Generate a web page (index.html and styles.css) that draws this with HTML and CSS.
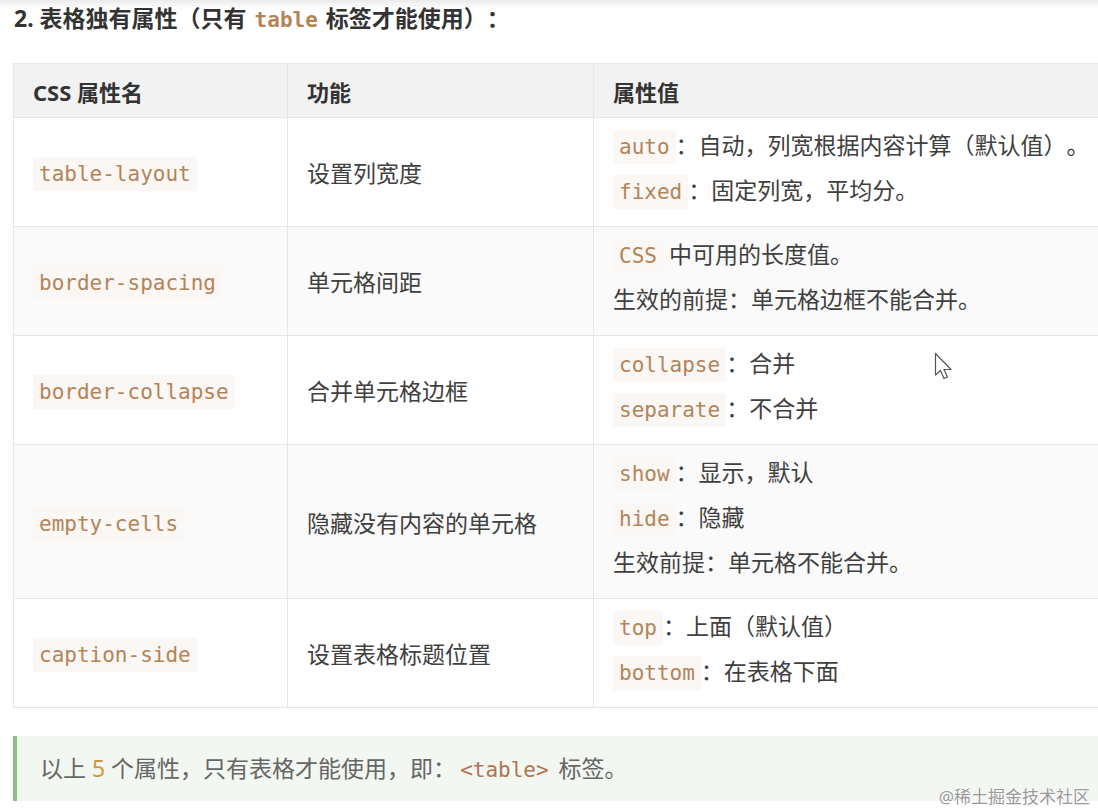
FILE: index.html
```html
<!DOCTYPE html>
<html lang="zh">
<head>
<meta charset="utf-8">
<title>表格独有属性</title>
<link rel="stylesheet" href="styles.css">
</head>
<body>
<div class="page">
  <h2 class="title">2. 表格独有属性（只有 <code class="ic">table</code> 标签才能使用）：</h2>
  <table class="props">
    <colgroup><col class="c1"><col class="c2"><col class="c3"></colgroup>
    <thead>
      <tr><th>CSS 属性名</th><th>功能</th><th>属性值</th></tr>
    </thead>
    <tbody>
      <tr>
        <td><code class="ic">table-layout</code></td>
        <td>设置列宽度</td>
        <td class="vals">
          <div class="ln"><code class="ic">auto</code>：自动，列宽根据内容计算（默认值）。</div>
          <div class="ln"><code class="ic">fixed</code>：固定列宽，平均分。</div>
        </td>
      </tr>
      <tr class="alt">
        <td><code class="ic">border-spacing</code></td>
        <td>单元格间距</td>
        <td class="vals">
          <div class="ln"><code class="ic">CSS</code> 中可用的长度值。</div>
          <div class="ln">生效的前提：单元格边框不能合并。</div>
        </td>
      </tr>
      <tr>
        <td><code class="ic">border-collapse</code></td>
        <td>合并单元格边框</td>
        <td class="vals">
          <div class="ln"><code class="ic">collapse</code>：合并</div>
          <div class="ln"><code class="ic">separate</code>：不合并</div>
        </td>
      </tr>
      <tr class="alt">
        <td><code class="ic">empty-cells</code></td>
        <td>隐藏没有内容的单元格</td>
        <td class="vals">
          <div class="ln"><code class="ic">show</code>：显示，默认</div>
          <div class="ln"><code class="ic">hide</code>：隐藏</div>
          <div class="ln">生效前提：单元格不能合并。</div>
        </td>
      </tr>
      <tr>
        <td><code class="ic">caption-side</code></td>
        <td>设置表格标题位置</td>
        <td class="vals">
          <div class="ln"><code class="ic">top</code>：上面（默认值）</div>
          <div class="ln"><code class="ic">bottom</code>：在表格下面</div>
        </td>
      </tr>
    </tbody>
  </table>
  <blockquote class="note">以上 <span class="num">5</span> 个属性，只有表格才能使用，即：<code class="ic plain">&lt;table&gt;</code> 标签。</blockquote>
</div>
<svg class="cursor" width="20" height="30" viewBox="0 0 20 30" aria-hidden="true">
  <path d="M1.5 1.5 L1.5 23 L6.5 18.5 L10 26.5 L13.5 25 L10 17.5 L17 17.5 Z" fill="#fff" stroke="#555" stroke-width="1.2" stroke-linejoin="round"/>
</svg>
<div class="mark">@稀土掘金技术社区</div>
</body>
</html>
```

FILE: styles.css
```css
html, body {
  margin: 0;
  padding: 0;
}
body {
  width: 1098px;
  height: 812px;
  overflow: hidden;
  position: relative;
  background: linear-gradient(#ebebeb 0, #ffffff 9px) no-repeat #fff;
  font-family: "Noto Sans", "Noto Sans CJK SC", sans-serif;
  color: #404040;
  text-spacing-trim: space-all;
}
.page {
  padding-left: 13px;
}
.title {
  margin: 0 0 0 1px;
  font-size: 23px;
  line-height: 36px;
  font-weight: 700;
  color: #333;
}
.ic {
  font-family: "DejaVu Sans Mono", "Liberation Mono", monospace;
  font-size: 21px;
  line-height: 1;
  color: #b3845a;
  background: #faf7f4;
  padding: 5px 6px;
  border-radius: 2px;
}
.title .ic {
  font-size: 21px;
  font-weight: 700;
  background: none;
  padding: 0 2px;
}
.props {
  margin-top: 27px;
  width: 1112px;
  border-collapse: collapse;
  table-layout: fixed;
  font-size: 23px;
}
.c1 { width: 274px; }
.c2 { width: 306px; }
.props th, .props td {
  box-sizing: border-box;
  border: 1px solid #e6e6e6;
  text-align: left;
  padding: 0 19px;
}
.props th {
  height: 54px;
  background: #f2f2f2;
  font-weight: 700;
  font-size: 22px;
  color: #333;
}
.props td {
  height: 108px;
  vertical-align: middle;
}
.props tr.alt td {
  background: #fafafa;
}
.props td.vals {
  padding: 5px 19px 13px;
}
.ln {
  line-height: 45px;
  white-space: nowrap;
}
.note {
  margin: 28px 0 0 0;
  padding: 14px 20px 14px 23px;
  line-height: 37px;
  border-left: 4px solid #8fbd86;
  background: #f3f7f2;
  font-size: 23px;
  color: #666;
}
.num {
  color: #c99a3c;
}
.ic.plain {
  background: none;
  padding: 0 4px;
  color: #b0744e;
}
.cursor {
  position: absolute;
  left: 934px;
  top: 352px;
}
.mark {
  position: absolute;
  right: 8px;
  bottom: 4px;
  font-size: 17px;
  color: #9a9a9a;
  text-shadow: 0 0 2px #fff, 0 0 2px #fff;
}
```
